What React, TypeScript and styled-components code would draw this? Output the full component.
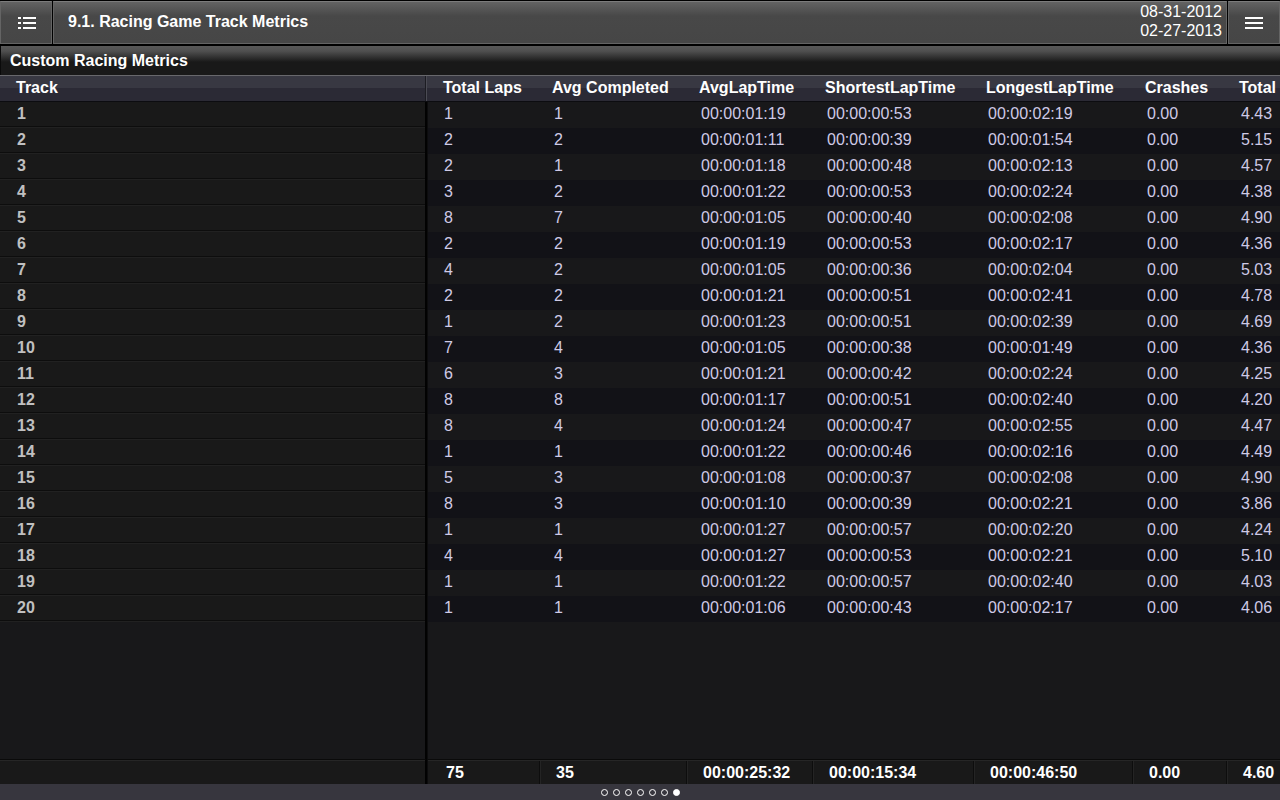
import React from "react";
import styled, { createGlobalStyle } from "styled-components";

const GlobalStyle = createGlobalStyle`
  * { box-sizing: border-box; }
  body {
    margin: 0;
    background: #000;
    color: #fff;
    font-family: "Liberation Sans", Arial, sans-serif;
    font-size: 16px;
    line-height: 19px;
  }
  button { font: inherit; color: inherit; }
`;

const Page = styled.div`
  display: flex;
  flex-direction: column;
  min-height: 100vh;
  overflow: hidden;
`;

const TopBar = styled.header`
  display: flex;
  gap: 1px;
  height: 46px;
  padding: 1px 0 2px;
`;

const panel = `
  border: 1px solid #646464;
  border-top-color: #7c7c7c;
  background: linear-gradient(#636363, #484848 14px, #464646);
`;

const TitlePanel = styled.div`
  ${panel}
  flex: 1;
  display: flex;
  justify-content: space-between;
  padding: 0 4px 0 14px;
`;

const BarButton = styled.button<{ $indent?: boolean }>`
  ${panel}
  display: flex;
  align-items: center;
  justify-content: center;
  width: 52px;
  padding: 0 0 0 ${(p) => (p.$indent ? 2 : 0)}px;
  cursor: pointer;
`;

const Title = styled.h1`
  margin: 0;
  padding-top: 10px;
  font-size: 16px;
`;

const Dates = styled.div`
  text-align: right;
`;

const Subtitle = styled.h2`
  margin: 0;
  height: 29px;
  padding: 5px 0 0 9px;
  border-left: 1px solid #0a0a0a;
  background: linear-gradient(#585858, #505050 5px, #191919 16px);
  font-size: 16px;
`;

const Content = styled.main`
  flex: 1;
  display: grid;
  background: #18181a;
`;

const Table = styled.table`
  width: 100%;
  height: 100%;
  table-layout: fixed;
  border-collapse: separate;
  border-spacing: 0;
`;

const Col = styled.col<{ $width?: number }>`
  width: ${(p) => (p.$width ? `${p.$width}px` : "auto")};
`;

/* The groove between the track names and the figures */
const grooveLeft = "border-right: 2px solid #020202;";
const grooveRight = "border-left: 1px solid #0c0c0d;";

const HeadCell = styled.th`
  height: 27px;
  padding: 0 0 2px 13px;
  border-top: 1px solid #68686c;
  border-bottom: 1px solid #0c0c10;
  background: linear-gradient(#383842 12px, #2b2a35 12px);
  text-align: left;
  white-space: nowrap;

  &:first-child {
    padding-left: 16px;
    background:
      linear-gradient(90deg, #1c1c22 1px, #4b4b54 1px) right / 2px 100% no-repeat,
      linear-gradient(#383842 12px, #2b2a35 12px);
  }
  &:nth-child(2) {
    padding-left: 16px;
  }
`;

const TrackCell = styled.th`
  height: 26px;
  padding: 0 0 4px 17px;
  ${grooveLeft}
  background: linear-gradient(#191919 24px, #0d0d0d 24px, #0d0d0d 25px, #212121 25px);
  color: #c0c0c0;
  text-align: left;
`;

const ValueCell = styled.td`
  height: 26px;
  padding: 0 0 4px 15px;
  color: #cfcae6;
  white-space: nowrap;

  &:nth-child(2) {
    ${grooveRight}
    padding-left: 16px;
  }
`;

const Row = styled.tr`
  background: #18181a;
  &:nth-child(even) {
    background: #121217;
  }
`;

const FillCell = styled.td`
  padding: 0;
  &:first-child {
    ${grooveLeft}
  }
  &:last-child {
    ${grooveRight}
  }
`;

const TotalCell = styled.td`
  height: 25px;
  padding: 0 0 0 17px;
  border-top: 1px solid #0a0a0a;
  background:
    linear-gradient(#262626, #262626) top / 100% 1px no-repeat,
    linear-gradient(90deg, #0d0d0d 1px, #242424 1px, #242424 2px, #191919 2px);
  font-weight: bold;
  white-space: nowrap;

  &:first-child {
    ${grooveLeft}
  }
  &:nth-child(2) {
    ${grooveRight}
    padding-left: 18px;
  }
  &:first-child,
  &:nth-child(2) {
    background: linear-gradient(#262626 1px, #191919 1px);
  }
`;

const Pager = styled.nav`
  display: flex;
  align-items: center;
  justify-content: center;
  gap: 5px;
  height: 16px;
  background: #37363e;
`;

const Dot = styled.button<{ $active: boolean }>`
  width: 7px;
  height: 7px;
  padding: 0;
  border: 1px solid #fff;
  border-radius: 50%;
  background: ${(p) => (p.$active ? "#fff" : "transparent")};
  cursor: pointer;
`;

const ListIcon = () => (
  <svg width="18" height="12" viewBox="0 0 18 12" fill="#fff" aria-hidden="true">
    <path d="M0 0h3v2H0zM5 0h13v2H5zM0 5h3v2H0zM5 5h13v2H5zM0 10h3v2H0zM5 10h13v2H5z" />
  </svg>
);

const MenuIcon = () => (
  <svg width="18" height="12" viewBox="0 0 18 12" fill="#fff" aria-hidden="true">
    <path d="M0 0h18v2H0zM0 5h18v2H0zM0 10h18v2H0z" />
  </svg>
);

const columns = [
  { label: "Total Laps", width: 112, total: "75" },
  { label: "Avg Completed", width: 147, total: "35" },
  { label: "AvgLapTime", width: 126, total: "00:00:25:32" },
  { label: "ShortestLapTime", width: 161, total: "00:00:15:34" },
  { label: "LongestLapTime", width: 159, total: "00:00:46:50" },
  { label: "Crashes", width: 94, total: "0.00" },
  { label: "Total", width: 54, total: "4.60" },
];

const tracks = [
  ["1", "1", "00:00:01:19", "00:00:00:53", "00:00:02:19", "0.00", "4.43"],
  ["2", "2", "00:00:01:11", "00:00:00:39", "00:00:01:54", "0.00", "5.15"],
  ["2", "1", "00:00:01:18", "00:00:00:48", "00:00:02:13", "0.00", "4.57"],
  ["3", "2", "00:00:01:22", "00:00:00:53", "00:00:02:24", "0.00", "4.38"],
  ["8", "7", "00:00:01:05", "00:00:00:40", "00:00:02:08", "0.00", "4.90"],
  ["2", "2", "00:00:01:19", "00:00:00:53", "00:00:02:17", "0.00", "4.36"],
  ["4", "2", "00:00:01:05", "00:00:00:36", "00:00:02:04", "0.00", "5.03"],
  ["2", "2", "00:00:01:21", "00:00:00:51", "00:00:02:41", "0.00", "4.78"],
  ["1", "2", "00:00:01:23", "00:00:00:51", "00:00:02:39", "0.00", "4.69"],
  ["7", "4", "00:00:01:05", "00:00:00:38", "00:00:01:49", "0.00", "4.36"],
  ["6", "3", "00:00:01:21", "00:00:00:42", "00:00:02:24", "0.00", "4.25"],
  ["8", "8", "00:00:01:17", "00:00:00:51", "00:00:02:40", "0.00", "4.20"],
  ["8", "4", "00:00:01:24", "00:00:00:47", "00:00:02:55", "0.00", "4.47"],
  ["1", "1", "00:00:01:22", "00:00:00:46", "00:00:02:16", "0.00", "4.49"],
  ["5", "3", "00:00:01:08", "00:00:00:37", "00:00:02:08", "0.00", "4.90"],
  ["8", "3", "00:00:01:10", "00:00:00:39", "00:00:02:21", "0.00", "3.86"],
  ["1", "1", "00:00:01:27", "00:00:00:57", "00:00:02:20", "0.00", "4.24"],
  ["4", "4", "00:00:01:27", "00:00:00:53", "00:00:02:21", "0.00", "5.10"],
  ["1", "1", "00:00:01:22", "00:00:00:57", "00:00:02:40", "0.00", "4.03"],
  ["1", "1", "00:00:01:06", "00:00:00:43", "00:00:02:17", "0.00", "4.06"],
];

const pages = [1, 2, 3, 4, 5, 6, 7];

export default function App() {
  const [page, setPage] = React.useState(7);

  return (
    <Page>
      <GlobalStyle />
      <TopBar>
        <BarButton type="button" aria-label="Reports" $indent>
          <ListIcon />
        </BarButton>
        <TitlePanel>
          <Title>9.1. Racing Game Track Metrics</Title>
          <Dates>
            <div>08-31-2012</div>
            <div>02-27-2013</div>
          </Dates>
        </TitlePanel>
        <BarButton type="button" aria-label="Menu">
          <MenuIcon />
        </BarButton>
      </TopBar>
      <Subtitle>Custom Racing Metrics</Subtitle>
      <Content>
        <Table>
          <colgroup>
            <Col />
            {columns.map((c) => (
              <Col key={c.label} $width={c.width} />
            ))}
          </colgroup>
          <thead>
            <tr>
              <HeadCell scope="col">Track</HeadCell>
              {columns.map((c) => (
                <HeadCell key={c.label} scope="col">
                  {c.label}
                </HeadCell>
              ))}
            </tr>
          </thead>
          <tbody>
            {tracks.map((values, i) => (
              <Row key={i}>
                <TrackCell scope="row">{i + 1}</TrackCell>
                {values.map((v, j) => (
                  <ValueCell key={j}>{v}</ValueCell>
                ))}
              </Row>
            ))}
            <tr>
              <FillCell />
              <FillCell colSpan={columns.length} />
            </tr>
          </tbody>
          <tfoot>
            <tr>
              <TotalCell />
              {columns.map((c) => (
                <TotalCell key={c.label}>{c.total}</TotalCell>
              ))}
            </tr>
          </tfoot>
        </Table>
      </Content>
      <Pager aria-label="Pages">
        {pages.map((n) => (
          <Dot
            key={n}
            type="button"
            aria-label={`Page ${n}`}
            $active={n === page}
            onClick={() => setPage(n)}
          />
        ))}
      </Pager>
    </Page>
  );
}
